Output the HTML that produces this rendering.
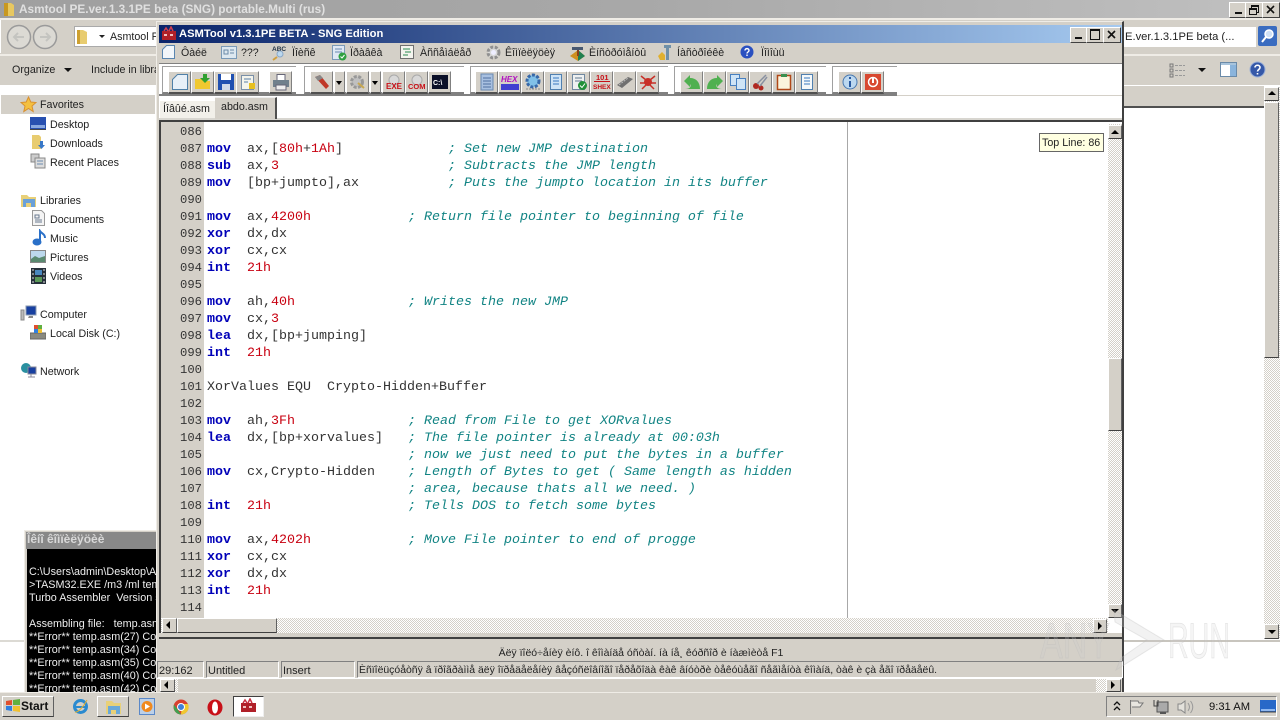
<!DOCTYPE html>
<html><head><meta charset="utf-8"><title>ASMTool</title>
<style>
html,body{margin:0;padding:0;width:1280px;height:720px;overflow:hidden;background:#fff}
body{position:relative;font:10.7px "Liberation Sans",sans-serif;color:#222}
div,span,svg{position:absolute;display:block}
.g{background:#d4d0c8}
.t{white-space:nowrap;line-height:14px}
.btn{width:21px;height:20px;background:#d4d0c8;border-top:1px solid #fff;border-left:1px solid #fff;border-right:1px solid #808080;border-bottom:2px solid #505050;box-sizing:content-box}
.btn svg{left:2px;top:1px}
.hatch{background:repeating-conic-gradient(#d4d0c8 0 25%,#fff 0 50%) 0 0/2px 2px}
.sb{background:#d4d0c8;border-top:1px solid #fff;border-left:1px solid #fff;border-right:1px solid #606060;border-bottom:1px solid #404040;box-sizing:border-box}
.ar{width:0;height:0;border-style:solid;border-color:transparent}
.grp{top:66px;height:28px;background:#fff;border-top:1px solid #a0a0a0;border-left:1px solid #a0a0a0;border-bottom:2px solid #808080;box-sizing:border-box}
.code{left:207px;font:13.33px/17px "Liberation Mono",monospace;color:#333;position:absolute;top:124px;width:800px}
.code p{margin:0;height:17px;position:relative;white-space:pre}
b{color:#0000b8;font-weight:bold}
em{color:#c80010;font-style:normal}
i{color:#128484;font-style:italic;position:absolute;top:0}
.num{left:180px;top:124px;font:12.2px/17px "Liberation Mono",monospace;color:#333;white-space:pre}
.side{left:50px}
.pn{top:661px;height:17px;border:1px solid;border-color:#808080 #fff #fff #808080;box-sizing:border-box;background:#d4d0c8;font-size:11px;line-height:18px;white-space:nowrap;overflow:hidden;padding-left:1px}
.wb{top:27px;width:16px;height:14px;background:#d4d0c8;border-top:1px solid #fff;border-left:1px solid #fff;border-right:1px solid #404040;border-bottom:1px solid #404040}
.menu{top:46px;font-size:10.6px;line-height:14px;white-space:nowrap;color:#222}
.con{left:29px;color:#eee;font-size:10.8px;line-height:13px;white-space:pre;width:127px;overflow:hidden}
</style></head>
<body>
<!-- outer explorer -->
<div style="left:0;top:0;width:1280px;height:18px;background:linear-gradient(90deg,#9f9f9f,#a8a8a8 50%,#c0c0c0)"></div>
<div style="left:0;top:18px;width:1280px;height:2px;background:#efece6"></div>
<svg style="left:3px;top:1px" width="13" height="16"><path d="M1 2h7l3 2v11H1z" fill="#e8c860"/><path d="M1 2h4v13H1z" fill="#c89820"/></svg>
<div class="t" style="left:19px;top:2px;color:#e0e0e0;font-size:11.8px;font-weight:bold">Asmtool PE.ver.1.3.1PE beta (SNG) portable.Multi (rus)</div>
<div class="wb" style="left:1229px;top:2px"><div style="left:5px;top:9px;width:7px;height:2px;background:#111"></div></div>
<div class="wb" style="left:1245px;top:2px"><div style="left:5px;top:2px;width:6px;height:5px;border:1px solid #111;border-top-width:2px"></div><div style="left:3px;top:5px;width:6px;height:4px;border:1px solid #111;border-top-width:2px;background:#d4d0c8"></div></div>
<div class="wb" style="left:1262px;top:2px"><svg style="left:3px;top:2px" width="10" height="10"><path d="M1 1l7 7M8 1l-7 7" stroke="#111" stroke-width="1.6"/></svg></div>
<div class="g" style="left:0;top:20px;width:1280px;height:34px;border-bottom:2px solid #efece6"></div>
<div style="left:0;top:20px;width:1px;height:33px;background:#fff"></div>
<svg style="left:4px;top:24px" width="56" height="28"><circle cx="15" cy="13" r="11.5" fill="#dcdad4" stroke="#9a9a9a" stroke-width="1.5"/><circle cx="41" cy="13" r="11.5" fill="#dcdad4" stroke="#9a9a9a" stroke-width="1.5"/><path d="M20 13h-9M14 9l-4 4 4 4M36 13h9M42 9l4 4-4 4" stroke="#c4c4c0" fill="none" stroke-width="2"/></svg>
<div style="left:74px;top:26px;width:90px;height:21px;background:#fff;border:1px solid #aaa;box-sizing:border-box"></div>
<svg style="left:76px;top:28px" width="13" height="17"><path d="M1 2h6l4 2v12H1z" fill="#e8cc70"/><path d="M1 2h3v14H1z" fill="#cda030"/></svg>
<div class="ar" style="left:99px;top:35px;border-width:3px 3px 0;border-top-color:#222"></div>
<div class="t" style="left:110px;top:30px">Asmtool PE</div>
<div class="g" style="left:0;top:56px;width:1280px;height:29px"></div>
<div class="t" style="left:12px;top:63px">Organize</div>
<div class="ar" style="left:64px;top:68px;border-width:4px 4px 0;border-top-color:#111"></div>
<div class="t" style="left:91px;top:63px">Include in library</div>
<!-- right explorer parts -->
<div style="left:1124px;top:27px;width:132px;height:20px;background:#fff"></div>
<div class="t" style="left:1125px;top:30px;font-size:11.2px">E.ver.1.3.1PE beta (...</div>
<svg style="left:1258px;top:26px" width="20" height="21"><rect width="19" height="20" rx="2" fill="#3a6cc0"/><circle cx="11" cy="8" r="4" fill="#cfe0f6" stroke="#fff" stroke-width="1.5"/><path d="M8 11l-4 5" stroke="#fff" stroke-width="2"/></svg>
<svg style="left:1169px;top:62px" width="17" height="16"><path d="M1 2h3v3H1zM1 7h3v3H1zM1 12h3v3H1z" fill="none" stroke="#777"/><path d="M6 3.500h10M6 8.500h10M6 13.500h10" stroke="#999" stroke-dasharray="3 1"/></svg>
<div class="ar" style="left:1198px;top:68px;border-width:4px 4px 0;border-top-color:#111"></div>
<svg style="left:1220px;top:62px" width="18" height="16"><rect x=".5" y=".5" width="16" height="14" fill="#fff" stroke="#6a8aa8"/><rect x="10" y="1" width="6" height="13" fill="#8ab4dc"/><rect x="1" y="1" width="15" height="2" fill="#a8c4dc"/></svg>
<svg style="left:1249px;top:61px" width="17" height="17"><circle cx="8.500" cy="8.500" r="7.500" fill="#3558a8" stroke="#9ab0d8"/><path d="M6 6.500c0-3 5-3 5 0 0 2-2.500 2-2.500 4M8.500 12v1.500" stroke="#fff" fill="none" stroke-width="1.600"/></svg>
<div class="g" style="left:1124px;top:86px;width:140px;height:20px;border-bottom:2px solid #505050"></div>
<div class="hatch" style="left:1264px;top:87px;width:16px;height:552px"></div>
<div class="sb" style="left:1264px;top:87px;width:15px;height:14px"></div>
<div class="ar" style="left:1268px;top:91px;border-width:0 4px 4px;border-bottom-color:#000"></div>
<div class="sb" style="left:1264px;top:102px;width:15px;height:256px"></div>
<div class="sb" style="left:1264px;top:624px;width:15px;height:15px"></div>
<div class="ar" style="left:1268px;top:630px;border-width:4px 4px 0;border-top-color:#000"></div>
<div style="left:1124px;top:640px;width:156px;height:2px;background:#c8c5be"></div>
<div style="left:0;top:640px;width:24px;height:2px;background:#dcdad4"></div>
<!-- sidebar -->
<div class="g" style="left:1px;top:95px;width:154px;height:19px"></div>
<svg style="left:20px;top:96px" width="17" height="17"><path d="M8.500 1l2.300 5 5.200.5-4 3.500 1.200 5.500-4.700-3-4.700 3 1.200-5.500-4-3.500 5.200-.5z" fill="#f4c040" stroke="#d89030"/></svg>
<div class="t" style="left:40px;top:98px">Favorites</div>
<svg style="left:30px;top:117px" width="16" height="14"><rect width="16" height="12" fill="#2850b0"/><rect x="1" y="8" width="14" height="3" fill="#89a8e0"/><rect y="12" width="16" height="1" fill="#444"/></svg>
<div class="t side" style="top:118px">Desktop</div>
<svg style="left:31px;top:134px" width="15" height="17"><path d="M1 1h7l2 2v12H1z" fill="#e8cc70"/><path d="M9 7h3v4h2l-3.500 4L7 11h2z" fill="#3878c8"/></svg>
<div class="t side" style="top:137px">Downloads</div>
<svg style="left:30px;top:153px" width="16" height="16"><rect x="1" y="1" width="8" height="8" fill="#ccc" stroke="#888"/><rect x="5" y="5" width="10" height="10" fill="#ddd" stroke="#888"/><path d="M7 8h6M7 11h6" stroke="#6a8ab0"/></svg>
<div class="t side" style="top:156px">Recent Places</div>
<svg style="left:20px;top:192px" width="17" height="16"><path d="M1 3h6l2 2h7v10H1z" fill="#e8d078"/><path d="M3 7h12v8H3z" fill="#6aa0d8"/><path d="M6 15v-4h5v4" fill="#e8d078"/></svg>
<div class="t" style="left:40px;top:194px">Libraries</div>
<svg style="left:32px;top:210px" width="13" height="16"><path d="M.5.500h9l3 3v12H.5z" fill="#f4f4f4" stroke="#999"/><path d="M3 5h4v3H3zM3 10h7M3 12h7" stroke="#6a7a90" fill="none"/></svg>
<div class="t side" style="top:213px">Documents</div>
<svg style="left:32px;top:229px" width="14" height="17"><ellipse cx="5" cy="13" rx="4.500" ry="3.500" fill="#2a70c8"/><path d="M8 13V2c2 3 5 3 5 7" stroke="#2a70c8" stroke-width="2" fill="none"/></svg>
<div class="t side" style="top:232px">Music</div>
<svg style="left:30px;top:250px" width="16" height="14"><rect x=".5" y=".5" width="15" height="12" fill="#bcd8ec" stroke="#888"/><path d="M1 9l4-3 4 2 6-2v6H1z" fill="#5a8a70"/></svg>
<div class="t side" style="top:251px">Pictures</div>
<svg style="left:31px;top:268px" width="15" height="16"><rect width="15" height="16" fill="#26303a"/><rect x="4" y="2" width="7" height="5" fill="#4a88c0"/><rect x="4" y="9" width="7" height="5" fill="#5a9858"/><path d="M1 2h2M1 6h2M1 10h2M1 14h2M12 2h2M12 6h2M12 10h2M12 14h2" stroke="#ddd"/></svg>
<div class="t side" style="top:270px">Videos</div>
<svg style="left:20px;top:305px" width="17" height="17"><rect x="6" y="1" width="10" height="9" fill="#1840a0" stroke="#8898b0"/><rect x="1" y="5" width="3" height="10" fill="#bbb" stroke="#888"/><path d="M9 11h4v2H8z" fill="#888"/></svg>
<div class="t" style="left:40px;top:308px">Computer</div>
<svg style="left:30px;top:324px" width="16" height="16"><rect x="0" y="9" width="16" height="6" fill="#8a8a80" stroke="#666"/><rect x="4" y="1" width="4" height="4" fill="#e05030"/><rect x="8" y="1" width="4" height="4" fill="#60b040"/><rect x="4" y="5" width="4" height="4" fill="#3080e0"/><rect x="8" y="5" width="4" height="4" fill="#f0c030"/></svg>
<div class="t side" style="top:327px">Local Disk (C:)</div>
<svg style="left:20px;top:362px" width="17" height="17"><circle cx="6" cy="6" r="5" fill="#2a90a0"/><rect x="8" y="5" width="8" height="7" fill="#1840a0" stroke="#889"/><path d="M11 12v3M8 15h7" stroke="#889"/></svg>
<div class="t" style="left:40px;top:365px">Network</div>
<!-- console -->
<div style="left:24px;top:530px;width:133px;height:162px;background:#d4d0c8;border-top:1px solid #efece6;border-left:1px solid #efece6;box-sizing:border-box"></div>
<div style="left:26px;top:532px;width:131px;height:17px;background:#888"></div>
<div class="t" style="left:27px;top:532px;color:#d8d8d8;font-size:12px;font-weight:bold">Îêíî êîìïèëÿöèè</div>
<div style="left:27px;top:549px;width:130px;height:143px;background:#000"></div>
<div class="con" style="top:566px">C:\Users\admin\Desktop\Asmtool</div>
<div class="con" style="top:579px">&gt;TASM32.EXE /m3 /ml temp.asm</div>
<div class="con" style="top:592px">Turbo Assembler  Version 5.3</div>
<div class="con" style="top:618px">Assembling file:   temp.asm</div>
<div class="con" style="top:631px">**Error** temp.asm(27) Code</div>
<div class="con" style="top:644px">**Error** temp.asm(34) Code</div>
<div class="con" style="top:657px">**Error** temp.asm(35) Code</div>
<div class="con" style="top:670px">**Error** temp.asm(40) Code</div>
<div class="con" style="top:683px;height:9px">**Error** temp.asm(42) Code</div>
<!-- ASM window -->
<div class="g" style="left:156px;top:21px;width:968px;height:671px;border-top:1px solid #efece6;border-left:1px solid #efece6;border-right:2px solid #404040;box-sizing:border-box"></div>
<div style="left:159px;top:25px;width:963px;height:18px;background:linear-gradient(90deg,#0a246a,#a6caf0)"></div>
<svg style="left:161px;top:26px" width="16" height="16"><path d="M1 5h14v9H1z" fill="#b02028"/><path d="M3 5l2-3 2 3M8 5l2-4 2 4" stroke="#d04050" fill="none" stroke-width="1.500"/><rect x="3" y="8" width="3" height="2" fill="#f0c0c0"/><rect x="9" y="8" width="3" height="2" fill="#f0c0c0"/></svg>
<div class="t" style="left:179px;top:27px;color:#fff;font-size:11.2px;font-weight:bold">ASMTool v1.3.1PE BETA - SNG Edition</div>
<div class="wb" style="left:1070px"><div style="left:4px;top:9px;width:7px;height:2px;background:#111"></div></div>
<div class="wb" style="left:1086px"><div style="left:3px;top:1px;width:8px;height:8px;border:1px solid #111;border-top-width:2px"></div></div>
<div class="wb" style="left:1103px"><svg style="left:3px;top:2px" width="10" height="10"><path d="M1 1l7 7M8 1l-7 7" stroke="#111" stroke-width="1.6"/></svg></div>
<!-- menu -->
<div style="left:159px;top:63px;width:963px;height:1px;background:#808080"></div>
<svg style="left:161px;top:44px" width="15" height="16"><path d="M5.500 1.500h8v13h-12v-9z" fill="#f2f6fa" stroke="#5a86b0"/></svg>
<div class="menu" style="left:181px">Ôàéë</div>
<svg style="left:221px;top:46px" width="16" height="13"><rect x=".5" y=".5" width="15" height="12" fill="#dde8f0" stroke="#7a9ab8"/><path d="M3 4h4v4H3zM9 4h4M9 7h4" stroke="#6a8aa8" fill="none"/></svg>
<div class="menu" style="left:241px">???</div>
<svg style="left:271px;top:44px" width="17" height="17"><text x="1" y="7" font-family="Liberation Sans" font-size="6.500" font-weight="bold" fill="#234">ABC</text><circle cx="9" cy="10" r="3" fill="#bcd8ee" stroke="#8aa8c8"/><path d="M6 13l-4 3" stroke="#d0a040" stroke-width="2"/></svg>
<div class="menu" style="left:292px">Ïîèñê</div>
<svg style="left:332px;top:45px" width="15" height="16"><rect x=".5" y=".5" width="12" height="14" fill="#dfe8f4" stroke="#7a9ab8"/><path d="M3 4h7M3 7h7" stroke="#6a8ab0"/><circle cx="10.500" cy="11.500" r="4" fill="#30a040"/><path d="M8.500 11.500l1.500 1.500 2.500-3" stroke="#fff" fill="none"/></svg>
<div class="menu" style="left:350px">Ïðàâêà</div>
<svg style="left:400px;top:45px" width="15" height="15"><rect x=".5" y=".5" width="13" height="13" fill="#f4f4ee" stroke="#707070"/><path d="M3 4h7M5 7h6M3 10h5" stroke="#2a8a50"/></svg>
<div class="menu" style="left:420px">Àññåìáëåð</div>
<svg style="left:485px;top:44px" width="17" height="17"><circle cx="8.500" cy="8.500" r="5.500" fill="#d8d8d8" stroke="#909090" stroke-width="3" stroke-dasharray="3 1.500"/><circle cx="8.500" cy="8.500" r="2.500" fill="#eef"/></svg>
<div class="menu" style="left:505px">Êîìïèëÿöèÿ</div>
<svg style="left:569px;top:44px" width="17" height="18"><path d="M1 12l8-6 7 6-7 5z" fill="#d09020"/><path d="M9 6l7 6-7 5z" fill="#208050"/><path d="M3 3h11v3H3z" fill="#485870"/><path d="M8 6h2v6H8z" fill="#884020"/></svg>
<div class="menu" style="left:589px">Èíñòðóìåíòû</div>
<svg style="left:657px;top:44px" width="16" height="18"><path d="M7 1h7v3h-2v12H9V4H7z" fill="#7090a8"/><path d="M1 12l4-4 3 3v5H3z" fill="#e0b030"/></svg>
<div class="menu" style="left:677px">Íàñòðîéêè</div>
<svg style="left:740px;top:45px" width="14" height="14"><circle cx="7" cy="7" r="6.500" fill="#2a50c0"/><path d="M5 5.500c0-2.500 4-2.500 4 0 0 1.500-2 1.500-2 3M7 9.500v1.500" stroke="#fff" fill="none" stroke-width="1.400"/></svg>
<div class="menu" style="left:761px">Ïîìîùü</div>
<!-- toolbar -->
<div style="left:159px;top:64px;width:963px;height:31px;background:#fff"></div>
<div style="left:159px;top:94px;width:738px;height:2px;background:#808080"></div>
<div class="grp" style="left:162px;width:134px"></div>
<div class="grp" style="left:304px;width:160px"></div>
<div class="grp" style="left:470px;width:198px"></div>
<div class="grp" style="left:674px;width:152px"></div>
<div class="grp" style="left:832px;width:65px"></div>

<div class="btn" style="left:168px;top:71px"><svg width="18" height="18"><path d="M6.500 1.500h10v15h-15v-10z" fill="#e8f0f8" stroke="#5080a8"/></svg></div>
<div class="btn" style="left:191px;top:71px"><svg width="18" height="18"><path d="M1 6h7l2 2h6v8H1z" fill="#f0c830"/><path d="M9 1h4v4h3l-5 5-5-5h3z" fill="#30a030"/></svg></div>
<div class="btn" style="left:214px;top:71px"><svg width="18" height="18"><rect x="1" y="1" width="16" height="16" fill="#2050b0"/><rect x="4" y="1" width="10" height="6" fill="#fff"/><rect x="5" y="11" width="8" height="6" fill="#cfd8e8"/></svg></div>
<div class="btn" style="left:236px;top:71px"><svg width="18" height="18"><rect x="2.500" y="2.500" width="12" height="14" fill="#f4f4ec" stroke="#7a90a8"/><path d="M5 6h7M5 9h4" stroke="#5a80a8"/><rect x="10" y="10" width="6" height="6" fill="#e8c020"/></svg></div>
<div class="btn" style="left:269px;top:71px"><svg width="18" height="18"><rect x="5" y="1.500" width="8" height="6" fill="#fff" stroke="#667"/><rect x="1" y="7" width="16" height="7" fill="#70808c"/><rect x="4" y="12" width="10" height="5" fill="#eee" stroke="#667"/></svg></div>

<div class="btn" style="left:310px;top:71px"><svg width="18" height="18"><path d="M2 4l5-2 9 11-3 3z" fill="#c03828"/><path d="M2 4l5-2 3 3-5 3z" fill="#888"/></svg></div>
<div class="btn" style="left:334px;top:71px;width:9px"><div class="ar" style="left:1px;top:9px;border-width:4px 3.500px 0;border-top-color:#000"></div></div>
<div class="btn" style="left:346px;top:71px"><svg width="18" height="18"><circle cx="8" cy="9" r="5.500" fill="#c0c0c0" stroke="#989898" stroke-width="3" stroke-dasharray="3 1.500"/><path d="M9 10l6 5" stroke="#c8a850" stroke-width="2"/></svg></div>
<div class="btn" style="left:370px;top:71px;width:9px"><div class="ar" style="left:1px;top:9px;border-width:4px 3.500px 0;border-top-color:#000"></div></div>
<div class="btn" style="left:382px;top:71px"><svg width="18" height="18"><circle cx="9" cy="7" r="5" fill="#d8d8d8" stroke="#aaa"/><text x="1" y="16" font-family="Liberation Sans" font-size="8" font-weight="bold" fill="#c81018">EXE</text></svg></div>
<div class="btn" style="left:405px;top:71px"><svg width="18" height="18"><circle cx="9" cy="7" r="5" fill="#d8d8d8" stroke="#aaa"/><text x="0" y="16" font-family="Liberation Sans" font-size="7.500" font-weight="bold" fill="#c81018">COM</text></svg></div>
<div class="btn" style="left:428px;top:71px"><svg width="18" height="18"><rect x="1" y="2" width="16" height="14" fill="#0a0f28"/><text x="2" y="12" font-family="Liberation Sans" font-size="7" font-weight="bold" fill="#fff">C:\</text></svg></div>

<div class="btn" style="left:475px;top:71px"><svg width="18" height="18"><rect x="3" y="1" width="12" height="16" fill="#a8c0e0" stroke="#6888b0"/><path d="M5 5h8M5 8h8M5 11h8M5 14h8" stroke="#5070a0"/></svg></div>
<div class="btn" style="left:498px;top:71px"><svg width="18" height="18"><text x="0" y="9" font-family="Liberation Sans" font-size="8" font-weight="bold" font-style="italic" fill="#b010c0">HEX</text><rect x="0" y="11" width="18" height="6" fill="#4040d0"/></svg></div>
<div class="btn" style="left:521px;top:71px"><svg width="18" height="18"><circle cx="9" cy="8" r="6" fill="#80c0e8" stroke="#3868a8" stroke-width="3" stroke-dasharray="3 1.500"/><path d="M2 16h14" stroke="#888" stroke-dasharray="2 1"/></svg></div>
<div class="btn" style="left:544px;top:71px"><svg width="18" height="18"><rect x="3.500" y="1.500" width="11" height="15" fill="#cfe4f6" stroke="#5080b0"/><path d="M6 5h6M6 8h6M6 11h6" stroke="#3878c0"/></svg></div>
<div class="btn" style="left:567px;top:71px"><svg width="18" height="18"><rect x="2.500" y="1.500" width="12" height="15" fill="#eef0f0" stroke="#7088a0"/><path d="M5 5h7M5 8h7" stroke="#607890"/><circle cx="12.500" cy="12.500" r="4.500" fill="#209038"/><path d="M10 12.500l2 2 3-4" stroke="#fff" fill="none"/></svg></div>
<div class="btn" style="left:590px;top:71px"><svg width="18" height="18"><text x="3" y="7" font-family="Liberation Sans" font-size="7.500" font-weight="bold" fill="#c81018">101</text><path d="M1 8.500h16" stroke="#c81018"/><text x="0" y="16" font-family="Liberation Sans" font-size="6.500" font-weight="bold" fill="#c81018">SHEX</text></svg></div>
<div class="btn" style="left:613px;top:71px"><svg width="18" height="18"><path d="M1 12L12 4l5 2-11 9z" fill="#707070"/><path d="M3 12l9-7" stroke="#bbb" stroke-dasharray="2 1"/></svg></div>
<div class="btn" style="left:636px;top:71px"><svg width="18" height="18"><circle cx="9" cy="9" r="4" fill="#c83028"/><path d="M2 3l5 4M16 3l-5 4M1 10h5M17 10h-5M3 16l4-4M15 16l-4-4" stroke="#c83028" stroke-width="1.500"/></svg></div>

<div class="btn" style="left:680px;top:71px"><svg width="18" height="18"><path d="M1 8l6-6v3c6 0 10 4 10 11H2c4 0 7-2 5-5v3z" fill="#50b050"/></svg></div>
<div class="btn" style="left:703px;top:71px"><svg width="18" height="18"><path d="M17 8l-6-6v3C5 5 1 9 1 16h15c-4 0-7-2-5-5v3z" fill="#50b050"/></svg></div>
<div class="btn" style="left:726px;top:71px"><svg width="18" height="18"><rect x="1.500" y="1.500" width="9" height="11" fill="#cfe4f6" stroke="#4880c0"/><rect x="7.500" y="5.500" width="9" height="11" fill="#cfe4f6" stroke="#4880c0"/></svg></div>
<div class="btn" style="left:749px;top:71px"><svg width="18" height="18"><circle cx="4" cy="13" r="3" fill="#b02820"/><circle cx="9" cy="15" r="2.500" fill="#b02820"/><path d="M5 11L14 2M8 13l7-9" stroke="#8890a0" stroke-width="1.500"/></svg></div>
<div class="btn" style="left:772px;top:71px"><svg width="18" height="18"><rect x="2.500" y="2.500" width="13" height="14" fill="#fbf4dc" stroke="#b04818" stroke-width="1.500"/><rect x="6" y="1" width="6" height="3" fill="#3a9050"/></svg></div>
<div class="btn" style="left:795px;top:71px"><svg width="18" height="18"><rect x="3.500" y="1.500" width="11" height="15" fill="#f4f8fa" stroke="#5080b0"/><path d="M6 5h6M6 8h6M6 11h6" stroke="#3878c0"/></svg></div>

<div class="btn" style="left:838px;top:71px"><svg width="18" height="18"><circle cx="9" cy="9" r="7" fill="#bcd8f0" stroke="#4878b0"/><path d="M9 4v2M9 8v6" stroke="#2858a0" stroke-width="2"/></svg></div>
<div class="btn" style="left:861px;top:71px"><svg width="18" height="18"><rect x="1" y="1" width="16" height="16" fill="#d84830"/><circle cx="9" cy="9" r="4.500" fill="none" stroke="#fff" stroke-width="1.500"/><rect x="8" y="5" width="2" height="5" fill="#fff"/></svg></div>
<!-- tabs -->
<div style="left:159px;top:96px;width:963px;height:22px;background:#fff"></div>
<div style="left:159px;top:118px;width:963px;height:2px;background:#d8d6d0"></div>
<div style="left:160px;top:101px;width:55px;height:17px;background:#f2f0ea"></div>
<div class="t" style="left:163px;top:102px">Íîâûé.asm</div>
<div class="g" style="left:215px;top:97px;width:60px;height:21px;border-right:2px solid #505050;border-top:1px solid #eee;box-sizing:content-box"></div>
<div class="t" style="left:221px;top:100px">abdo.asm</div>
<!-- editor -->
<div style="left:159px;top:120px;width:963px;height:518px;background:#fff;border-top:2px solid #404040;border-left:2px solid #404040;border-bottom:2px solid #404040;box-sizing:border-box"></div>
<div class="g" style="left:161px;top:122px;width:43px;height:496px"></div>
<div style="left:847px;top:122px;width:1px;height:496px;background:#a8a8a8"></div>
<div class="num">086
087
088
089
090
091
092
093
094
095
096
097
098
099
100
101
102
103
104
105
106
107
108
109
110
111
112
113
114</div>
<div class="code"><p> </p><p><b>mov</b>  ax,[<em>80h</em>+<em>1Ah</em>]<i style="left:241px">; Set new JMP destination</i></p><p><b>sub</b>  ax,<em>3</em><i style="left:241px">; Subtracts the JMP length</i></p><p><b>mov</b>  [bp+jumpto],ax<i style="left:241px">; Puts the jumpto location in its buffer</i></p><p> </p><p><b>mov</b>  ax,<em>4200h</em><i style="left:201px">; Return file pointer to beginning of file</i></p><p><b>xor</b>  dx,dx</p><p><b>xor</b>  cx,cx</p><p><b>int</b>  <em>21h</em></p><p> </p><p><b>mov</b>  ah,<em>40h</em><i style="left:201px">; Writes the new JMP</i></p><p><b>mov</b>  cx,<em>3</em></p><p><b>lea</b>  dx,[bp+jumping]</p><p><b>int</b>  <em>21h</em></p><p> </p><p>XorValues EQU  Crypto-Hidden+Buffer</p><p> </p><p><b>mov</b>  ah,<em>3Fh</em><i style="left:201px">; Read from File to get XORvalues</i></p><p><b>lea</b>  dx,[bp+xorvalues]<i style="left:201px">; The file pointer is already at 00:03h</i></p><p><i style="left:201px">; now we just need to put the bytes in a buffer</i></p><p><b>mov</b>  cx,Crypto-Hidden<i style="left:201px">; Length of Bytes to get ( Same length as hidden</i></p><p><i style="left:201px">; area, because thats all we need. )</i></p><p><b>int</b>  <em>21h</em><i style="left:201px">; Tells DOS to fetch some bytes</i></p><p> </p><p><b>mov</b>  ax,<em>4202h</em><i style="left:201px">; Move File pointer to end of progge</i></p><p><b>xor</b>  cx,cx</p><p><b>xor</b>  dx,dx</p><p><b>int</b>  <em>21h</em></p></div>
<!-- tooltip -->
<div class="t" style="left:1039px;top:133px;width:65px;height:19px;background:#ffffe1;border:1px solid #666;box-sizing:border-box;line-height:18px;padding-left:2px">Top Line: 86</div>
<!-- v scrollbar -->
<div class="hatch" style="left:1108px;top:124px;width:14px;height:494px"></div>
<div class="sb" style="left:1108px;top:125px;width:14px;height:14px"></div>
<div class="ar" style="left:1111px;top:130px;border-width:0 4px 4px;border-bottom-color:#000"></div>
<div class="sb" style="left:1108px;top:358px;width:14px;height:73px"></div>
<div class="sb" style="left:1108px;top:604px;width:14px;height:14px"></div>
<div class="ar" style="left:1111px;top:609px;border-width:4px 4px 0;border-top-color:#000"></div>
<!-- h scrollbar -->
<div class="hatch" style="left:161px;top:618px;width:947px;height:15px"></div>
<div class="sb" style="left:162px;top:618px;width:15px;height:15px"></div>
<div class="ar" style="left:166px;top:621px;border-width:4px 4px 4px 0;border-right-color:#000"></div>
<div class="sb" style="left:177px;top:618px;width:100px;height:15px"></div>
<div class="sb" style="left:1093px;top:619px;width:14px;height:14px"></div>
<div class="ar" style="left:1098px;top:622px;border-width:4px 0 4px 4px;border-left-color:#000"></div>
<div style="left:159px;top:633px;width:963px;height:5px;background:#d4d0c8"></div>
<div style="left:159px;top:637px;width:963px;height:2px;background:#404040"></div>
<!-- status -->
<div class="t" style="left:159px;top:645px;width:964px;text-align:center;font-size:10.5px;line-height:16px">Äëÿ ïîëó÷åíèÿ èíô. î êîìàíäå óñòàí. íà íå¸ êóðñîð è íàæìèòå F1</div>
<div class="pn" style="left:157px;width:47px">29:162</div>
<div class="pn" style="left:206px;width:73px">Untitled</div>
<div class="pn" style="left:281px;width:74px">Insert</div>
<div class="pn" style="left:357px;width:766px;font-size:10.45px">Èñïîëüçóåòñÿ â ïðîãðàììå äëÿ îïðåäåëåíèÿ âåçóñëîâíîãî ïåðåõîäà êàê âíóòðè òåêóùåãî ñåãìåíòà êîìàíä, òàê è çà åãî ïðåäåëû.</div>
<div style="left:157px;top:678px;width:965px;height:1px;background:#fff"></div>
<div class="sb" style="left:160px;top:679px;width:15px;height:13px"></div>
<div class="ar" style="left:164px;top:681px;border-width:4px 4px 4px 0;border-right-color:#000"></div>
<div class="hatch" style="left:175px;top:679px;width:3px;height:13px"></div>
<div class="hatch" style="left:1096px;top:679px;width:10px;height:13px"></div>
<div class="sb" style="left:1106px;top:679px;width:15px;height:13px"></div>
<div class="ar" style="left:1111px;top:681px;border-width:4px 0 4px 4px;border-left-color:#000"></div>
<!-- taskbar -->
<div class="g" style="left:0;top:692px;width:1280px;height:28px;border-top:1px solid #efece6;box-sizing:border-box"></div>
<div class="sb" style="left:2px;top:696px;width:52px;height:21px"></div>
<svg style="left:5px;top:698px" width="16" height="16"><path d="M1 3l6-1v5H1z" fill="#e05030"/><path d="M8 2l7-1v6H8z" fill="#60b040"/><path d="M1 8h6v5l-6-1z" fill="#3080e0"/><path d="M8 8h7v6l-7-1z" fill="#f0c030"/></svg>
<div class="t" style="left:21px;top:699px;font-size:12px;font-weight:bold;color:#111">Start</div>
<svg style="left:72px;top:698px" width="17" height="17"><circle cx="8.500" cy="8.500" r="6" fill="none" stroke="#2a8ad0" stroke-width="3"/><path d="M3 9h11" stroke="#2a8ad0" stroke-width="2"/><path d="M3 14C6 15 12 8 15 2" stroke="#e0b030" fill="none"/></svg>
<div class="sb" style="left:97px;top:696px;width:32px;height:21px"></div>
<svg style="left:105px;top:699px" width="17" height="16"><path d="M1 2h6l2 2h7v11H1z" fill="#e8d078"/><path d="M3 7h12v8H3z" fill="#6aa8d8"/><path d="M6 15v-4h5v4" fill="#e8d078"/></svg>
<svg style="left:139px;top:698px" width="16" height="17"><rect x=".5" y=".5" width="15" height="16" fill="#bcd0e8" stroke="#5a88c8"/><circle cx="8" cy="8.500" r="5.500" fill="#f08a20"/><path d="M6 5.500l5 3-5 3z" fill="#fff"/></svg>
<svg style="left:173px;top:699px" width="16" height="16"><circle cx="8" cy="8" r="7.500" fill="#d84030"/><path d="M8 15.500A7.500 7.500 0 0 1 1 5.500L5 11z" fill="#40a050"/><path d="M8 15.500A7.500 7.500 0 0 0 15 5h-6z" fill="#f0c830"/><circle cx="8" cy="8" r="3.500" fill="#4080d8" stroke="#fff"/></svg>
<svg style="left:207px;top:699px" width="16" height="17"><ellipse cx="8" cy="8.500" rx="7.500" ry="8" fill="#c81018"/><ellipse cx="8" cy="8.500" rx="3" ry="6" fill="#fff"/></svg>
<div style="left:233px;top:696px;width:31px;height:21px;background:#fff;border:1px solid;border-color:#404040 #eee #eee #404040;box-sizing:border-box"></div>
<svg style="left:240px;top:698px" width="17" height="16"><path d="M1 5h15v9H1z" fill="#b02028"/><path d="M3 5l2-3 2 3M8 5l2-4 2 4" stroke="#c83040" fill="none" stroke-width="1.500"/><rect x="3" y="8" width="3" height="2" fill="#f0c0c0"/><rect x="9" y="8" width="3" height="2" fill="#f0c0c0"/></svg>
<div style="left:1106px;top:696px;width:171px;height:21px;border:1px solid;border-color:#808080 #fff #fff #808080;box-sizing:border-box"></div>
<svg style="left:1112px;top:700px" width="10" height="12"><path d="M2 5l3-3 3 3M2 10l3-3 3 3" fill="none" stroke="#111" stroke-width="1.300"/></svg>
<svg style="left:1128px;top:699px" width="18" height="16"><path d="M2.500 1v14" stroke="#777"/><path d="M3 2h7l1 2h4l-3 4H4" fill="#e8e6e0" stroke="#777"/></svg>
<svg style="left:1152px;top:699px" width="17" height="16"><rect x="5" y="3" width="11" height="10" fill="#aaa" stroke="#555"/><path d="M2 1v6h4V1" fill="none" stroke="#444"/><path d="M8 14h6" stroke="#555" stroke-width="2"/></svg>
<svg style="left:1177px;top:699px" width="17" height="16"><path d="M1 5h3l4-3v12l-4-3H1z" fill="#e4e2dc" stroke="#888"/><path d="M11 4c2 3 2 5 0 8M13.500 2c3 4 3 8 0 12" stroke="#999" fill="none"/></svg>
<div class="t" style="left:1209px;top:700px;font-size:11.2px;color:#111">9:31 AM</div>
<svg style="left:1260px;top:700px" width="16" height="13"><rect width="16" height="12" fill="#2868c8"/><rect x="1" y="9" width="14" height="2" fill="#90b8f0"/><path d="M0 12h16" stroke="#444"/></svg>
<!-- watermark -->
<svg style="left:1030px;top:600px" width="205" height="80">
<g fill="#ccc" fill-opacity=".2" stroke="#bbb" stroke-opacity=".35" stroke-width=".8" font-family="Liberation Sans" font-size="50">
<text x="10" y="58" textLength="70" lengthAdjust="spacingAndGlyphs">ANY</text>
<text x="138" y="58" textLength="62" lengthAdjust="spacingAndGlyphs">RUN</text>
</g>
<path d="M84 10l50 30-48 30 5-12 26-18-32-18z" fill="#ccc" fill-opacity=".25" stroke="#bbb" stroke-opacity=".3"/>
</svg>
</body></html>
